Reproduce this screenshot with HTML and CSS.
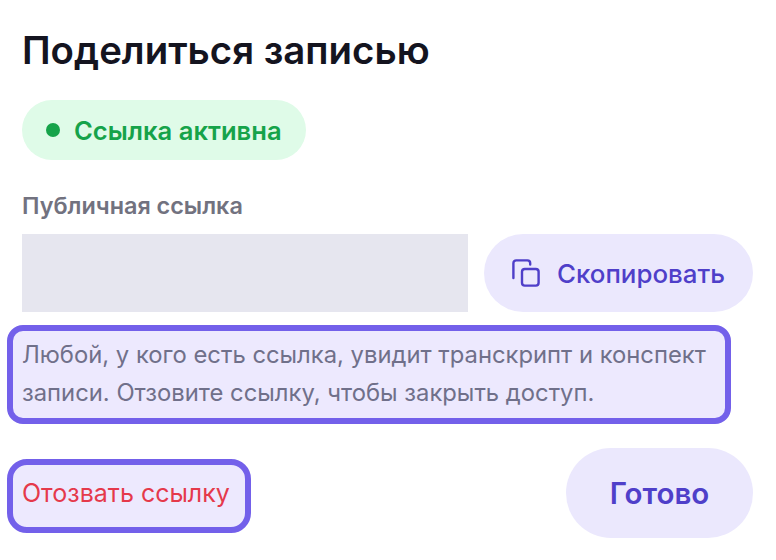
FILE: index.html
```html
<!DOCTYPE html>
<html lang="ru">
<head>
<meta charset="utf-8">
<title>Поделиться записью</title>
<link rel="stylesheet" href="styles.css">
</head>
<body>
<main class="dialog">
  <h1 class="title">Поделиться записью</h1>
  <div class="status"><span class="dot"></span>Ссылка активна</div>
  <div class="label">Публичная ссылка</div>
  <div class="link-row">
    <div class="field"></div>
    <button class="btn copy">
      <svg class="icon" width="28" height="28" viewBox="0 0 28 28" fill="none" stroke="currentColor" stroke-width="2.4" stroke-linecap="round" stroke-linejoin="round"><rect x="10" y="10" width="16.6" height="16.6" rx="2.8"/><path d="M1.4 19 V4.2 A2.8 2.8 0 0 1 4.2 1.4 H15.4 A2.8 2.8 0 0 1 18.2 4.2 V5.6"/></svg>
      <span>Скопировать</span>
    </button>
  </div>
  <p class="note focus">Любой, у кого есть ссылка, увидит транскрипт и конспект<br>записи. Отзовите ссылку, чтобы закрыть доступ.</p>
  <div class="actions">
    <button class="revoke focus">Отозвать ссылку</button>
    <button class="btn done">Готово</button>
  </div>
</main>
</body>
</html>
```
FILE: styles.css
```css
* { box-sizing: border-box; }
html, body { margin: 0; background: #fff; }
body { font-family: Inter, "Noto Sans", sans-serif; }
button { font-family: inherit; border: 0; cursor: pointer; }
.dialog { width: 776px; height: 560px; padding: 27px 23px 0 22px; overflow: hidden; }
.title { margin: 0; font-size: 38.4px; line-height: 46px; font-weight: 600; color: #14141f; }
.status { display: inline-flex; align-items: center; gap: 14px; height: 60px; margin-top: 27px; padding: 0 24px; border-radius: 30px; background: #dffbe8; color: #16a34a; font-size: 25.6px; font-weight: 600; }
.dot { width: 14px; height: 14px; border-radius: 50%; background: #16a34a; }
.label { margin-top: 31px; font-size: 23.4px; line-height: 30px; font-weight: 600; color: #72727f; }
.link-row { display: flex; gap: 16px; margin-top: 13px; }
.field { width: 446px; height: 78px; background: #e6e6ef; }
.btn { display: flex; align-items: center; justify-content: center; background: #ebe8fd; color: #4f3fc9; }
.copy { gap: 17px; width: 269px; height: 78px; border-radius: 39px; font-size: 25.9px; font-weight: 500; }
.focus { border: 6px solid #7360ea; background: #ede9fe; margin-left: -15px; }
.note { width: 724px; height: 99px; margin-top: 13px; margin-bottom: 0; padding: 5px 9px; border-radius: 16px; font-size: 23.8px; line-height: 38px; color: #70708a; }
.actions { display: flex; justify-content: space-between; align-items: flex-start; margin-top: 24px; }
.revoke { width: 244px; height: 74px; margin-top: 11px; padding: 0 9px 6px; border-radius: 20px; font-size: 25px; color: #e5394b; text-align: left; }
.done { width: 187px; height: 90px; border-radius: 45px; font-size: 29.5px; font-weight: 600; }
```
